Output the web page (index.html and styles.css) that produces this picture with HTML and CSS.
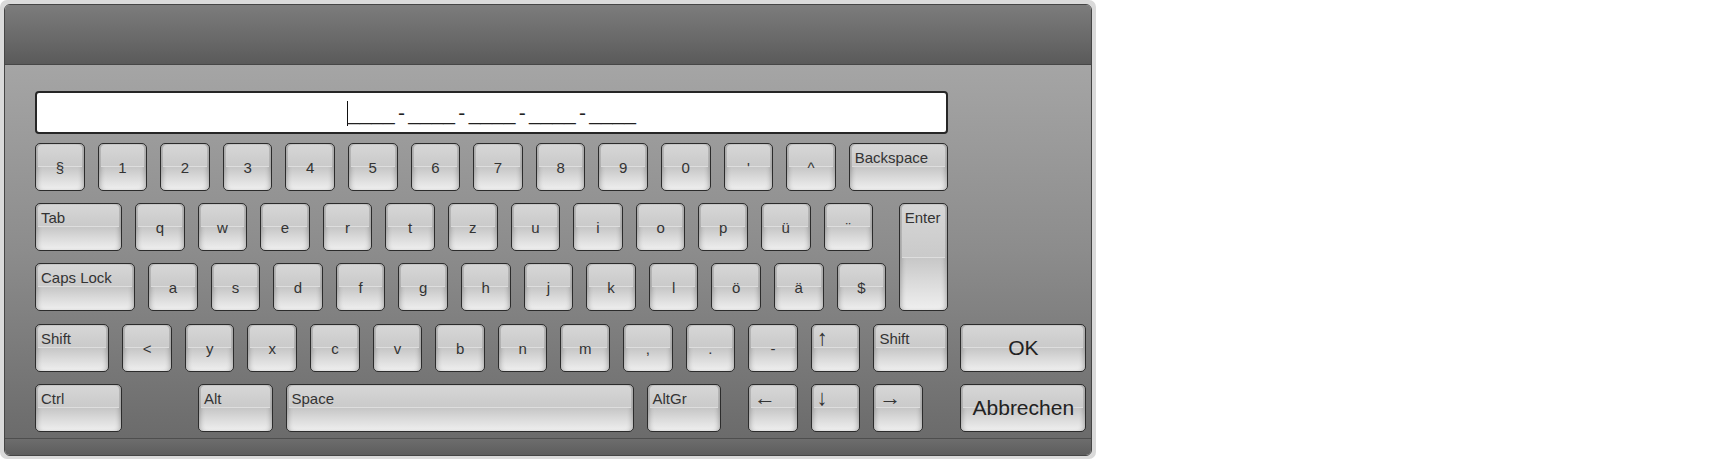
FILE: index.html
```html
<!DOCTYPE html>
<html lang="de">
<head>
<meta charset="utf-8">
<title>Bildschirmtastatur</title>
<link rel="stylesheet" href="styles.css">
</head>
<body>
<div class="win">
  <div class="panel">
    <div class="header"></div>
    <div class="body">
      <div class="field"><span class="caret"></span><span>____</span><span class="sep">-</span><span>____</span><span class="sep">-</span><span>____</span><span class="sep">-</span><span>____</span><span class="sep">-</span><span>____</span></div>
      <div class="keys">
        <div class="row">
          <div class="key"><span>§</span></div>
          <div class="key"><span>1</span></div>
          <div class="key"><span>2</span></div>
          <div class="key"><span>3</span></div>
          <div class="key"><span>4</span></div>
          <div class="key"><span>5</span></div>
          <div class="key"><span>6</span></div>
          <div class="key"><span>7</span></div>
          <div class="key"><span>8</span></div>
          <div class="key"><span>9</span></div>
          <div class="key"><span>0</span></div>
          <div class="key"><span>'</span></div>
          <div class="key"><span>^</span></div>
          <div class="key tl w-back"><span>Backspace</span></div>
        </div>
        <div class="mid">
          <div class="col">
            <div class="row">
              <div class="key tl w-tab"><span>Tab</span></div>
              <div class="key"><span>q</span></div>
              <div class="key"><span>w</span></div>
              <div class="key"><span>e</span></div>
              <div class="key"><span>r</span></div>
              <div class="key"><span>t</span></div>
              <div class="key"><span>z</span></div>
              <div class="key"><span>u</span></div>
              <div class="key"><span>i</span></div>
              <div class="key"><span>o</span></div>
              <div class="key"><span>p</span></div>
              <div class="key"><span>ü</span></div>
              <div class="key"><span>¨</span></div>
            </div>
            <div class="row">
              <div class="key tl w-caps"><span>Caps Lock</span></div>
              <div class="key"><span>a</span></div>
              <div class="key"><span>s</span></div>
              <div class="key"><span>d</span></div>
              <div class="key"><span>f</span></div>
              <div class="key"><span>g</span></div>
              <div class="key"><span>h</span></div>
              <div class="key"><span>j</span></div>
              <div class="key"><span>k</span></div>
              <div class="key"><span>l</span></div>
              <div class="key"><span>ö</span></div>
              <div class="key"><span>ä</span></div>
              <div class="key"><span>$</span></div>
            </div>
          </div>
          <div class="key tl enter"><span>Enter</span></div>
        </div>
        <div class="bottom">
          <div class="col">
            <div class="row">
              <div class="key tl w-shift"><span>Shift</span></div>
              <div class="key"><span>&lt;</span></div>
              <div class="key"><span>y</span></div>
              <div class="key"><span>x</span></div>
              <div class="key"><span>c</span></div>
              <div class="key"><span>v</span></div>
              <div class="key"><span>b</span></div>
              <div class="key"><span>n</span></div>
              <div class="key"><span>m</span></div>
              <div class="key"><span>,</span></div>
              <div class="key"><span>.</span></div>
              <div class="key"><span>-</span></div>
              <div class="key tl arrow"><span>↑</span></div>
              <div class="key tl w-shift"><span>Shift</span></div>
            </div>
            <div class="row">
              <div class="key tl w-tab ctrl"><span>Ctrl</span></div>
              <div class="key tl w-alt"><span>Alt</span></div>
              <div class="key tl space"><span>Space</span></div>
              <div class="key tl w-alt altgr"><span>AltGr</span></div>
              <div class="key tl arrow"><span>←</span></div>
              <div class="key tl arrow"><span>↓</span></div>
              <div class="key tl arrow"><span>→</span></div>
            </div>
          </div>
          <div class="col">
            <div class="key action"><span>OK</span></div>
            <div class="key action"><span>Abbrechen</span></div>
          </div>
        </div>
      </div>
    </div>
    <div class="footer"></div>
  </div>
</div>
</body>
</html>
```

FILE: styles.css
```css
html, body {
  margin: 0;
  padding: 0;
  background: #ffffff;
}

.win {
  box-sizing: border-box;
  width: 1096px;
  height: 459px;
  padding: 4px 4px 3px 4px;
  background: #dadada;
  border-radius: 7px;
}

.panel {
  box-sizing: border-box;
  height: 100%;
  border: 1px solid #454545;
  border-radius: 6px;
  overflow: hidden;
  display: flex;
  flex-direction: column;
}

.header {
  height: 59px;
  flex: none;
  border-bottom: 1px solid #464646;
  background: linear-gradient(to bottom, #7c7c7c 0%, #6a6a6a 55%, #5a5a5a 100%);
}

.body {
  flex: 1;
  padding: 26px 0 0 30px;
  background: linear-gradient(to bottom, #a5a5a5 0%, #8c8c8c 50%, #6b6b6b 100%);
}

.footer {
  height: 16px;
  flex: none;
  border-top: 1px solid #4e4e4e;
  background: linear-gradient(to bottom, #6d6d6d, #5d5d5d);
}

.field {
  box-sizing: border-box;
  width: 913px;
  height: 43px;
  margin-bottom: 9px;
  border: 2px solid #262626;
  border-radius: 4px;
  background: #ffffff;
  display: flex;
  align-items: center;
  justify-content: center;
  font: 21px "Liberation Sans", Arial, sans-serif;
  color: #222;
  white-space: pre;
}

.caret {
  display: inline-block;
  width: 0;
  height: 25px;
  border-left: 1px solid #111;
  margin-top: 2px;
}

.sep {
  display: inline-block;
  width: 13.6px;
  text-align: center;
}

.keys {
  display: flex;
  flex-direction: column;
  gap: 12px;
}

.row {
  display: flex;
  gap: 13px;
}

.col {
  display: flex;
  flex-direction: column;
  gap: 12px;
}

.mid {
  display: flex;
  gap: 12.6px;
}

.bottom {
  display: flex;
  gap: 12.6px;
  margin-top: 1px;
}

.key {
  position: relative;
  box-sizing: border-box;
  flex: none;
  width: 49.6px;
  height: 48px;
  border: 1px solid #2c2c2c;
  border-radius: 5px;
  background: linear-gradient(to bottom, #d0d0d0 0%, #c8c8c8 48%, #c6c6c6 50%, #d9d9d9 72%, #efefef 100%);
  box-shadow: inset 4px 0 5px -3px rgba(0, 0, 0, 0.28), inset -4px 0 5px -3px rgba(0, 0, 0, 0.28);
  display: flex;
  align-items: center;
  justify-content: center;
  font: 15px "Liberation Sans", Arial, sans-serif;
  color: #333;
}

.key::before {
  content: "";
  position: absolute;
  left: 2px;
  right: 2px;
  top: 1px;
  height: 46%;
  border-radius: 4px 4px 0 0;
  background: linear-gradient(to bottom, #d6d6d6 0%, #cacaca 100%);
  border-bottom: 1px solid #dedede;
}

.key span {
  position: relative;
  z-index: 1;
}

.key.tl {
  align-items: flex-start;
  justify-content: flex-start;
  padding: 5px 0 0 5px;
}

.key.arrow {
  font-size: 22px;
  line-height: 22px;
  padding: 2px 0 0 5px;
}

.w-back { width: 99px; }
.w-tab { width: 87px; }
.w-caps { width: 100px; }
.w-shift { width: 74.3px; }
.w-alt { width: 74.5px; }

.ctrl { margin-right: 63px; }
.space { width: 348px; }
.altgr { margin-right: 14px; }

.enter {
  height: 108px;
}

.enter::before {
  height: 49%;
}

.action {
  width: 126px;
  font-size: 21px;
  color: #222;
}
```
